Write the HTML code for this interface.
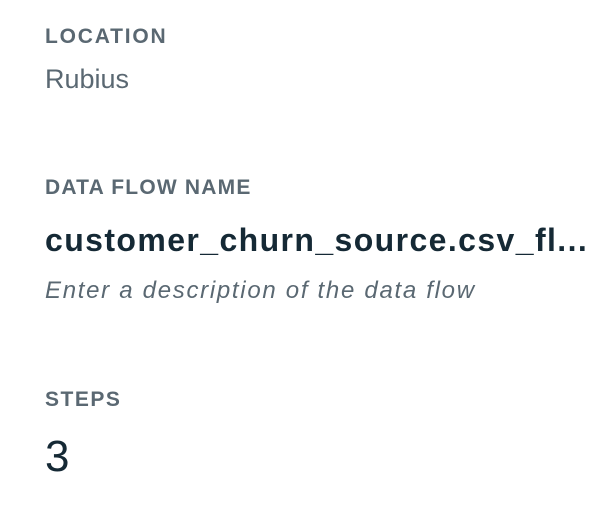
<!DOCTYPE html>
<html><head><meta charset="utf-8"><style>
html,body{margin:0;padding:0;background:#fff;width:612px;height:532px;overflow:hidden;font-family:"Liberation Sans",sans-serif}
div{position:absolute;left:45px;white-space:nowrap;line-height:1}
.l{font-size:21px;font-weight:bold;color:#5a6872;letter-spacing:1.8px}
</style></head><body>
<div class="l" style="top:26px">LOCATION</div>
<div style="top:66px;font-size:27px;color:#5a6872">Rubius</div>
<div class="l" style="top:177px;letter-spacing:1.2px">DATA FLOW NAME</div>
<div style="top:224px;font-size:32px;font-weight:bold;color:#152935;letter-spacing:1.4px">customer_churn_source.csv_fl...</div>
<div style="top:279px;font-size:24px;font-style:italic;color:#5a6872;letter-spacing:1.7px">Enter a description of the data flow</div>
<div class="l" style="top:389px;letter-spacing:1.5px">STEPS</div>
<div style="top:435px;font-size:44px;color:#152935">3</div>
</body></html>
